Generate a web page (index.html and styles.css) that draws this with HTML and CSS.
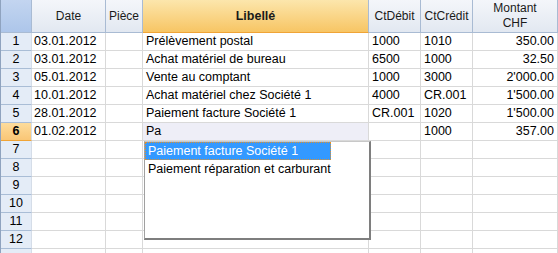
FILE: index.html
```html
<!DOCTYPE html>
<html>
<head>
<meta charset="utf-8">
<link rel="stylesheet" href="styles.css">
</head>
<body>
<div class="sheet">
  <div class="row head">
    <div class="c corner"></div>
    <div class="c h">Date</div>
    <div class="c h">Pièce</div>
    <div class="c h hsel">Libellé</div>
    <div class="c h">CtDébit</div>
    <div class="c h">CtCrédit</div>
    <div class="c h">Montant<br>CHF</div>
  </div>
  <div class="row"><div class="c n">1</div><div class="c d">03.01.2012</div><div class="c"></div><div class="c t">Prélèvement postal</div><div class="c t">1000</div><div class="c t">1010</div><div class="c r">350.00</div></div>
  <div class="row"><div class="c n">2</div><div class="c d">03.01.2012</div><div class="c"></div><div class="c t">Achat matériel de bureau</div><div class="c t">6500</div><div class="c t">1000</div><div class="c r">32.50</div></div>
  <div class="row"><div class="c n">3</div><div class="c d">05.01.2012</div><div class="c"></div><div class="c t">Vente au comptant</div><div class="c t">1000</div><div class="c t">3000</div><div class="c r">2'000.00</div></div>
  <div class="row"><div class="c n">4</div><div class="c d">10.01.2012</div><div class="c"></div><div class="c t">Achat matériel chez Société 1</div><div class="c t">4000</div><div class="c t">CR.001</div><div class="c r">1'500.00</div></div>
  <div class="row"><div class="c n">5</div><div class="c d">28.01.2012</div><div class="c"></div><div class="c t">Paiement facture Société 1</div><div class="c t">CR.001</div><div class="c t">1020</div><div class="c r">1'500.00</div></div>
  <div class="row"><div class="c n nsel">6</div><div class="c d">01.02.2012</div><div class="c"></div><div class="c t edit">Pa</div><div class="c t"></div><div class="c t">1000</div><div class="c r">357.00</div></div>
  <div class="row"><div class="c n">7</div><div class="c"></div><div class="c"></div><div class="c"></div><div class="c"></div><div class="c"></div><div class="c"></div></div>
  <div class="row"><div class="c n">8</div><div class="c"></div><div class="c"></div><div class="c"></div><div class="c"></div><div class="c"></div><div class="c"></div></div>
  <div class="row"><div class="c n">9</div><div class="c"></div><div class="c"></div><div class="c"></div><div class="c"></div><div class="c"></div><div class="c"></div></div>
  <div class="row"><div class="c n">10</div><div class="c"></div><div class="c"></div><div class="c"></div><div class="c"></div><div class="c"></div><div class="c"></div></div>
  <div class="row"><div class="c n">11</div><div class="c"></div><div class="c"></div><div class="c"></div><div class="c"></div><div class="c"></div><div class="c"></div></div>
  <div class="row"><div class="c n">12</div><div class="c"></div><div class="c"></div><div class="c"></div><div class="c"></div><div class="c"></div><div class="c"></div></div>
  <div class="row"><div class="c n"></div><div class="c"></div><div class="c"></div><div class="c"></div><div class="c"></div><div class="c"></div><div class="c"></div></div>
  <div class="dropdown">
    <div class="item sel">Paiement facture Société 1</div>
    <div class="item">Paiement réparation et carburant</div>
  </div>
</div>
</body>
</html>
```
FILE: styles.css
```css
* { box-sizing: border-box; }
html, body { margin: 0; padding: 0; background: #fff; overflow: hidden; }
body { width: 558px; height: 253px; font-family: "Liberation Sans", Arial, sans-serif; font-size: 12.5px; color: #000; }
.sheet { position: relative; width: 558px; height: 253px; overflow: hidden; border-left: 1px solid #8fa3bf; }
.row { display: grid; grid-template-columns: 31px 74px 37px 226px 52px 52px 85px; height: 18px; }
.row.head { height: 33px; }
.c { border-right: 1px solid #d9d9d9; border-bottom: 1px solid #d9d9d9; white-space: nowrap; overflow: hidden; line-height: 17px; }
.head .c { border-right: 1px solid #a9bbd3; border-bottom: 1px solid #a9bbd3; background: linear-gradient(#f4f6fa, #e2e8f1); display: flex; align-items: center; justify-content: center; text-align: center; font-size: 12px; line-height: 15px; color: #1a1a1a; }
.head .c.corner { background: linear-gradient(#c3d5f0, #adc6ea); border-right-color: #a9bbd3; }
.head .c.hsel { background: linear-gradient(#fce6ac, #f7c564); border-bottom: 1px solid #f0a436; font-weight: bold; font-size: 12.5px; }
.c.n { background: #e4ecf7; border-bottom: 1px solid #a9bdd6; border-right: 1px solid #d5dde8; text-align: center; }
.c.nsel { background: linear-gradient(#fddc9c, #f9c676); border-bottom: 1px solid #f0a436; font-weight: bold; }
.c.d { padding-left: 2px; }
.c.t { padding-left: 3px; }
.c.r { text-align: right; padding-right: 3px; }
.c.edit { background: #eeeef7; }
.dropdown { position: absolute; left: 143px; top: 141px; width: 227px; height: 99px; background: #fff; border-left: 1px solid #a0a0a0; border-top: 1px solid #c8c8c8; border-right: 2px solid #7e7e7e; border-bottom: 2px solid #7e7e7e; }
.item { height: 18px; line-height: 18px; padding-left: 3px; white-space: nowrap; }
.item.sel { width: 186px; line-height: 16px; background: #3399ff; color: #fff; border: 1px dotted #e0902a; padding-left: 2px; }
```
